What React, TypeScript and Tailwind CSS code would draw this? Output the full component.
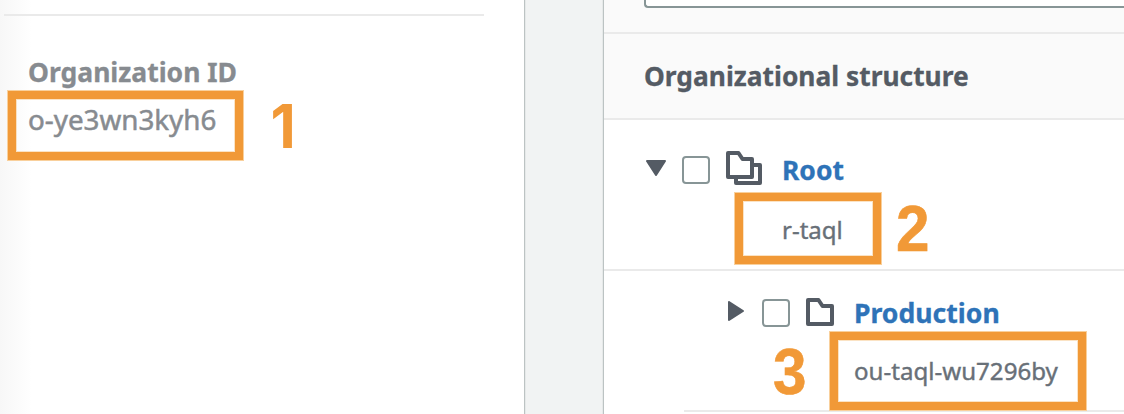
import type { ReactNode } from "react";

function Checkbox() {
  return <span className="h-7 w-7 shrink-0 rounded-[4px] border-2 border-[#879596] bg-white" />;
}

function FolderIcon() {
  return (
    <svg className="h-7 w-7 shrink-0" viewBox="0 0 28 28" fill="none" stroke="#545b64" strokeWidth="4" strokeLinejoin="round">
      <path d="M2 2H12.5L16.5 8H26V26H2Z" />
    </svg>
  );
}

function FolderStackIcon() {
  return (
    <svg className="h-[34px] w-9 shrink-0" viewBox="0 0 36 34" fill="none" stroke="#545b64" strokeWidth="4" strokeLinejoin="round">
      <path d="M2 2H12.5L16.5 8H26V26H2Z" />
      <path d="M28 14H34V32H10V28" />
    </svg>
  );
}

function Highlight({ className }: { className: string }) {
  return (
    <div className={`pointer-events-none absolute border border-[#f9d09c] ${className}`}>
      <div className="h-full w-full border-[8px] border-[#f19937]">
        <div className="h-full w-full border border-[#f9d09c]/60" />
      </div>
    </div>
  );
}

function Marker({ className, children }: { className: string; children: ReactNode }) {
  return (
    <span className={`absolute leading-[64px] font-bold text-[#f19937] ${className}`}>
      {children}
    </span>
  );
}

export default function App() {
  return (
    <div className="relative flex h-[414px] w-[1124px] overflow-hidden bg-[#f2f3f3] font-['Noto_Sans',sans-serif] whitespace-nowrap">
      <section className="w-[525px] shrink-0 border-r border-[#bcc3c3] bg-white bg-linear-to-r from-[#f7f7f7] to-white to-[6%]">
        <div className="ml-1 h-4 w-[480px] border-b-2 border-[#eaeaea]" />
        <div className="pt-[36px] pl-7 text-[#878b90]">
          <h3 className="text-[27px] leading-10 font-bold [-webkit-text-stroke:0.3px]">
            <span className="inline-block origin-left scale-x-[0.981]">Organization ID</span>
          </h3>
          <p className="mt-2 text-[27px] leading-10 [-webkit-text-stroke:0.5px]">
            <span className="inline-block origin-left scale-x-[1.028]">o-ye3wn3kyh6</span>
          </p>
        </div>
      </section>

      <div className="w-[78px] shrink-0 border-x border-[#e6e9e9] bg-[#f1f3f3]" />

      <section className="flex min-w-0 flex-1 flex-col border-l border-[#bcc3c3] bg-white">
        <div className="h-[34px] border-b-2 border-[#eaeaea] bg-[#fafafa] pl-10">
          <div className="h-2 w-[500px] rounded-bl-[4px] border-b-2 border-l-2 border-[#879596] bg-white" />
        </div>
        <header className="h-[86px] border-b-2 border-[#eaeaea] bg-[#fafafa] pt-[22px] pl-10">
          <h2 className="text-[27px] leading-10 font-bold text-[#545b64] [-webkit-text-stroke:0.3px]">
            <span className="inline-block origin-left scale-x-[0.976]">Organizational structure</span>
          </h2>
        </header>

        <div className="h-[151px] border-b-2 border-[#eaeaea] pt-[30px] pl-[42px]">
          <div className="flex h-10 items-center">
            <svg className="mt-[-4px] h-4 w-5" viewBox="0 0 20 16" fill="#545b64" stroke="#545b64" strokeWidth="2" strokeLinejoin="round">
              <path d="M1 1H19L10 15Z" />
            </svg>
            <span className="ml-4 flex"><Checkbox /></span>
            <span className="mt-[-4px] ml-4 flex"><FolderStackIcon /></span>
            <a className="ml-5 text-[27px] leading-10 font-bold text-[#2e73b8] [-webkit-text-stroke:0.3px]">
              <span className="inline-block origin-left scale-x-[0.98]">Root</span>
            </a>
          </div>
          <p className="mt-[20px] ml-[136px] text-[24px] leading-10 text-[#687078] [-webkit-text-stroke:0.4px]">
            <span className="inline-block origin-left">r-taql</span>
          </p>
        </div>

        <div className="ml-20 h-[141px] border-b-2 border-[#eaeaea] pt-[22px] pl-[43px]">
          <div className="flex h-10 items-center">
            <svg className="mt-[-4px] h-5 w-[17px]" viewBox="0 0 17 20" fill="#545b64" stroke="#545b64" strokeWidth="2" strokeLinejoin="round">
              <path d="M2 1V19L16 10Z" />
            </svg>
            <span className="ml-[18px] flex"><Checkbox /></span>
            <span className="mt-[-2px] ml-4 flex"><FolderIcon /></span>
            <a className="ml-5 text-[27px] leading-10 font-bold text-[#2e73b8] [-webkit-text-stroke:0.3px]">
              <span className="inline-block origin-left scale-x-[0.985]">Production</span>
            </a>
          </div>
          <p className="mt-[18px] ml-[127px] text-[24px] leading-10 text-[#687078] [-webkit-text-stroke:0.4px]">
            <span className="inline-block origin-left scale-x-[1.004]">ou-taql-wu7296by</span>
          </p>
        </div>
      </section>

      <Highlight className="top-[90px] left-[7px] h-[71px] w-[237px]" />
      <Highlight className="top-[192px] left-[734px] h-[73px] w-[148px]" />
      <Highlight className="top-[331px] left-[829px] h-[80px] w-[258px]" />
      <Marker className="top-[94px] left-[270px] scale-x-[0.96] font-['Inter',sans-serif] text-[61px]">1</Marker>
      <Marker className="top-[197px] left-[895px] scale-x-[0.94] font-['Liberation_Sans',sans-serif] text-[64px] [-webkit-text-stroke:0.6px]">2</Marker>
      <Marker className="top-[340px] left-[772px] scale-x-[0.94] font-['Liberation_Sans',sans-serif] text-[64px] [-webkit-text-stroke:0.6px]">3</Marker>
    </div>
  );
}
